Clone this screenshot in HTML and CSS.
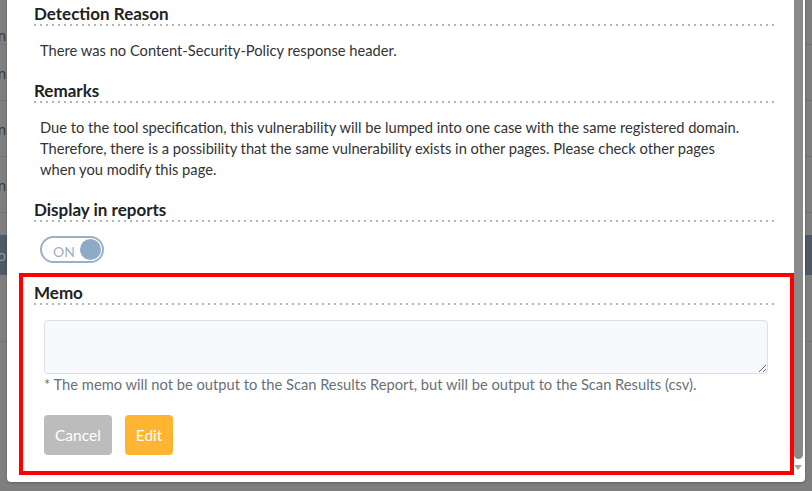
FILE: index.html
```html
<!DOCTYPE html>
<html>
<head>
<meta charset="utf-8">
<title>Vulnerability detail</title>
<link rel="stylesheet" href="styles.css">
</head>
<body>

   <!-- the list page behind the dimmed overlay -->
   <div class="backdrop">
      <div class="bg_row first"><span class="bg_cell">n</span></div>
      <div class="bg_row"><span class="bg_cell">n</span></div>
      <div class="bg_row"><span class="bg_cell">n</span></div>
      <div class="bg_row"><span class="bg_cell">n</span></div>
      <div class="bg_row short"></div>
      <div class="bg_row head"><span class="bg_cell">o</span></div>
      <div class="bg_row tall"></div>
   </div>

   <div class="modal">
      <div class="modal_body">

         <h3 class="section_title">Detection Reason</h3>
         <p class="section_text">There was no Content-Security-Policy response header.</p>

         <h3 class="section_title">Remarks</h3>
         <p class="section_text">Due to the tool specification, this vulnerability will be lumped into one case with the same registered domain. Therefore, there is a possibility that the same vulnerability exists in other pages. Please check other pages when you modify this page.</p>

         <h3 class="section_title">Display in reports</h3>
         <div class="toggle">
            <span class="toggle_label">ON</span>
            <span class="toggle_knob"></span>
         </div>

         <div class="memo_box">
            <h3 class="section_title">Memo</h3>
            <textarea class="memo_input"></textarea>
            <p class="memo_note">* The memo will not be output to the Scan Results Report, but will be output to the Scan Results (csv).</p>
            <div class="button_row">
               <button class="btn btn_cancel">Cancel</button>
               <button class="btn btn_edit">Edit</button>
            </div>
         </div>

      </div>

      <div class="scrollbar">
         <div class="scroll_thumb"></div>
         <div class="scroll_arrow"></div>
      </div>
   </div>

</body>
</html>
```

FILE: styles.css
```css
body
{
   margin: 0 ;
   width: 812px ;
   height: 491px ;
   overflow: hidden ;
   position: relative ;
   background-color: #7f7f7f ;
   font-family: "Source Sans Pro", Lato, "Noto Sans", sans-serif ;
}

.backdrop
{
   display: flex ;
   flex-direction: column ;
}

.bg_row
{
   height: 55px ;
   border-bottom: 1px solid #737373 ;
   display: flex ;
   align-items: center ;
}

.bg_row.first  { height: 44px ; margin-top: -31px ; padding-top: 31px ; align-items: flex-end ; }
.bg_row.short  { height: 22px ; border-bottom: none ; }
.bg_row.head   { height: 40px ; background-color: #4f5a67 ; border-bottom: none ; }
.bg_row.tall   { height: 66px ; }

.bg_cell
{
   width: 6px ;
   overflow: hidden ;
   direction: rtl ;
   font-size: 15px ;
   color: #3c3c3c ;
}

.bg_row.head .bg_cell { color: #8d96a0 ; }

/* The dialog floats over the list */
.modal
{
   position: absolute ;
   left: 7px ;
   right: 7px ;
   top: -20px ;
   bottom: 9px ;
   display: flex ;
   background-color: #ffffff ;
   border-radius: 4px ;
   box-shadow: 0 1px 3px rgba( 0, 0, 0, 0.25 ) ;
}

.modal_body
{
   flex: 1 ;
   padding: 23px 18px 0 27px ;
   color: #333333 ;
}

.section_title
{
   margin: 0 0 14px 0 ;
   padding-bottom: 1px ;
   font-size: 17px ;
   line-height: 22px ;
   font-weight: 700 ;
   color: #222222 ;
   background-image: linear-gradient( to right, #b4b4b4 2px, transparent 2px ) ;
   background-size: 6px 2px ;
   background-repeat: repeat-x ;
   background-position: left bottom ;
}

.section_text
{
   margin: 0 0 19px 0 ;
   padding: 0 30px 0 6px ;
   font-size: 14.7px ;
   line-height: 21px ;
}

.toggle
{
   box-sizing: border-box ;
   width: 64px ;
   height: 27px ;
   margin: 2px 0 0 6px ;
   display: flex ;
   align-items: center ;
   justify-content: space-between ;
   padding: 0 1px 0 11px ;
   border: 2px solid #9ab0c7 ;
   border-radius: 14px ;
}

.toggle_label
{
   font-size: 14px ;
   color: #a3b0be ;
   padding-top: 3px ;
}

.toggle_knob
{
   width: 21px ;
   height: 21px ;
   border-radius: 50% ;
   background-color: #8eaac6 ;
}

.memo_box
{
   margin: 10px -19px 0 -15px ;
   padding: 5px 15px 16px 11px ;
   border: 4px solid #ff0000 ;
}

.memo_box .section_title
{
   margin-bottom: 15px ;
}

.memo_input
{
   display: block ;
   box-sizing: border-box ;
   width: 724px ;
   height: 54px ;
   margin-left: 10px ;
   background-color: #f8f9fc ;
   border: 1px solid #dcdfe5 ;
   border-radius: 4px ;
}

.memo_note
{
   margin: 0 0 20px 10px ;
   font-size: 14.7px ;
   line-height: 21px ;
   color: #6a7079 ;
}

.button_row
{
   display: flex ;
   gap: 13px ;
   margin-left: 10px ;
}

.btn
{
   height: 40px ;
   padding: 0 11px ;
   border: none ;
   border-radius: 4px ;
   font-family: inherit ;
   font-size: 15.5px ;
   color: #ffffff ;
}

.btn_cancel { background-color: #bcbcbc ; }
.btn_edit   { background-color: #ffb532 ; }

.scrollbar
{
   width: 10px ;
   margin-right: 2px ;
   display: flex ;
   flex-direction: column ;
   align-items: center ;
}

.scroll_thumb
{
   width: 9px ;
   height: 479px ;
   background-color: #8a8a8a ;
   border-radius: 0 0 5px 5px ;
}

.scroll_arrow
{
   margin-top: 6px ;
   width: 0 ;
   height: 0 ;
   border-left: 4px solid transparent ;
   border-right: 4px solid transparent ;
   border-top: 5px solid #a3a3a3 ;
}
```
